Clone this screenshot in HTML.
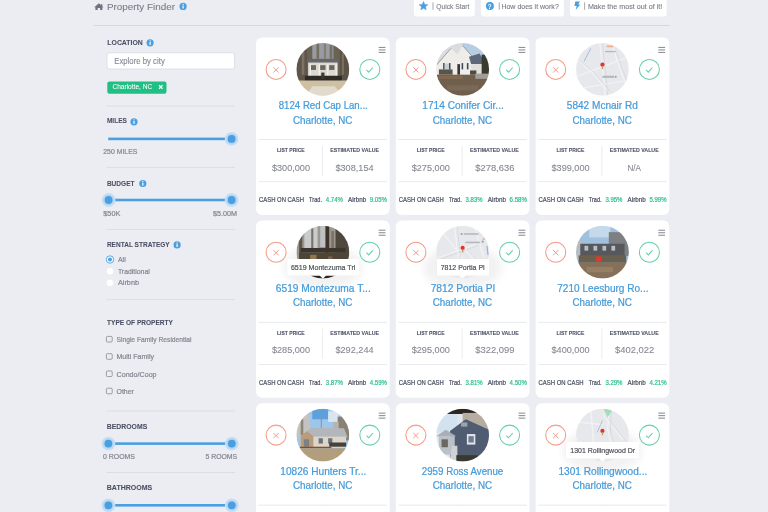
<!DOCTYPE html>
<html><head><meta charset="utf-8"><style>
html,body{margin:0;padding:0;background:#ecedf3;width:768px;height:512px;overflow:hidden}
svg{display:block;position:absolute;left:0;top:0}
#tx{will-change:transform}
text{font-family:"Liberation Sans",sans-serif;white-space:pre}
</style></head><body>
<svg width="768" height="512" viewBox="0 0 768 512">
<defs><filter id="blur3" x="-50%" y="-50%" width="200%" height="200%"><feGaussianBlur stdDeviation="4"/></filter><filter id="imgblur" x="-10%" y="-10%" width="120%" height="120%"><feGaussianBlur stdDeviation="0.7"/></filter><filter id="blur1" x="-50%" y="-50%" width="200%" height="200%"><feGaussianBlur stdDeviation="0.6"/></filter><clipPath id="clip0"><circle cx="322.85" cy="69.4" r="26.4"/></clipPath><clipPath id="clip1"><circle cx="462.65" cy="69.4" r="26.4"/></clipPath><clipPath id="clip2"><circle cx="602.45" cy="69.4" r="26.4"/></clipPath><clipPath id="clip3"><circle cx="322.85" cy="252.20000000000002" r="26.4"/></clipPath><clipPath id="clip4"><circle cx="462.65" cy="252.20000000000002" r="26.4"/></clipPath><clipPath id="clip5"><circle cx="602.45" cy="252.20000000000002" r="26.4"/></clipPath><clipPath id="clip6"><circle cx="322.85" cy="435.1" r="26.4"/></clipPath><clipPath id="clip7"><circle cx="462.65" cy="435.1" r="26.4"/></clipPath><clipPath id="clip8"><circle cx="602.45" cy="435.1" r="26.4"/></clipPath></defs>
<rect width="768" height="512" fill="#ecedf3"/>
<path d="M94.2 7.3 L98.9 3.2 L101.2 5.2 L101.2 3.9 L102.3 3.9 L102.3 6.2 L103.6 7.3 L102.4 7.3 L102.4 9.9 L100.1 9.9 L100.1 7.9 L97.7 7.9 L97.7 9.9 L95.4 9.9 L95.4 7.3 Z" fill="#6f7380"/>
<circle cx="183.1" cy="6.4" r="3.6" fill="#4a9fe0"/><rect x="182.5" y="5.6000000000000005" width="1.2" height="2.9" fill="#fff"/><circle cx="183.1" cy="4.4" r="0.65" fill="#fff"/>
<rect x="94" y="25" width="576" height="1" fill="#d6d7dd"/>
<path d="M413.9 -5 H474.8 V13.5 Q474.8 16.5 471.8 16.5 H416.9 Q413.9 16.5 413.9 13.5 Z" fill="#fff"/>
<path d="M480.9 -5 H563.9 V13.5 Q563.9 16.5 560.9 16.5 H483.9 Q480.9 16.5 480.9 13.5 Z" fill="#fff"/>
<path d="M570 -5 H666.7 V13.5 Q666.7 16.5 663.7 16.5 H573 Q570 16.5 570 13.5 Z" fill="#fff"/>
<polygon points="423.50,1.50 424.73,4.40 427.87,4.68 425.50,6.75 426.20,9.82 423.50,8.20 420.80,9.82 421.50,6.75 419.13,4.68 422.27,4.40" fill="#4a9fe0" stroke="#4a9fe0" stroke-width="0.5" stroke-linejoin="round"/>
<circle cx="489.9" cy="5.9" r="4.0" fill="#4a9fe0"/>
<path d="M575.3 1.4 L579.9 1.4 L578.2 4.6 L580.3 4.6 L575.6 9.9 L576.7 5.9 L574.4 5.9 Z" fill="#4a9fe0"/>
<rect x="432.6" y="2.4" width="0.8" height="7.4" fill="#8f929a"/>
<rect x="498.8" y="2.4" width="0.8" height="7.4" fill="#8f929a"/>
<rect x="584.3" y="2.4" width="0.8" height="7.4" fill="#8f929a"/>
<circle cx="150.1" cy="42.8" r="3.6" fill="#4a9fe0"/><rect x="149.5" y="42.0" width="1.2" height="2.9" fill="#fff"/><circle cx="150.1" cy="40.8" r="0.65" fill="#fff"/>
<rect x="107" y="52.8" width="127.6" height="16.2" rx="2" fill="#fff" stroke="#d8d9df" stroke-width="0.8"/>
<rect x="107.3" y="81.5" width="59.2" height="12.2" rx="2" fill="#20bf84"/>
<path d="M159.1 85.3 L162.5 88.7 M162.5 85.3 L159.1 88.7" stroke="#fff" stroke-width="1.3"/>
<rect x="106.5" y="105.6" width="128.5" height="1" fill="#dcdde3"/>
<circle cx="134.0" cy="121.8" r="3.6" fill="#4a9fe0"/><rect x="133.4" y="121.0" width="1.2" height="2.9" fill="#fff"/><circle cx="134.0" cy="119.8" r="0.65" fill="#fff"/>
<rect x="108.2" y="137.6" width="123.39999999999999" height="2.6" fill="#4a9fe0"/>
<circle cx="231.6" cy="138.9" r="6.9" fill="#c6dff4"/><circle cx="231.6" cy="138.9" r="5.4" fill="#b5d5f1"/><circle cx="231.6" cy="138.9" r="3.9" fill="#4a9fe0"/>
<rect x="106.5" y="166.9" width="128.5" height="1" fill="#dcdde3"/>
<circle cx="142.8" cy="183.5" r="3.6" fill="#4a9fe0"/><rect x="142.20000000000002" y="182.7" width="1.2" height="2.9" fill="#fff"/><circle cx="142.8" cy="181.5" r="0.65" fill="#fff"/>
<rect x="108.2" y="198.7" width="123.39999999999999" height="2.6" fill="#4a9fe0"/>
<circle cx="108.6" cy="200.0" r="6.9" fill="#c6dff4"/><circle cx="108.6" cy="200.0" r="5.4" fill="#b5d5f1"/><circle cx="108.6" cy="200.0" r="3.9" fill="#4a9fe0"/>
<circle cx="231.6" cy="200.0" r="6.9" fill="#c6dff4"/><circle cx="231.6" cy="200.0" r="5.4" fill="#b5d5f1"/><circle cx="231.6" cy="200.0" r="3.9" fill="#4a9fe0"/>
<rect x="106.5" y="228.9" width="128.5" height="1" fill="#dcdde3"/>
<circle cx="177.1" cy="244.9" r="3.6" fill="#4a9fe0"/><rect x="176.5" y="244.1" width="1.2" height="2.9" fill="#fff"/><circle cx="177.1" cy="242.9" r="0.65" fill="#fff"/>
<circle cx="110" cy="259.5" r="3.7" fill="#fff" stroke="#4a9fe0" stroke-width="0.9"/><circle cx="110" cy="259.5" r="2" fill="#4a9fe0"/>
<circle cx="110" cy="271.2" r="3.8" fill="#fff" stroke="#e4e5ea" stroke-width="0.6"/>
<circle cx="110" cy="282.9" r="3.8" fill="#fff" stroke="#e4e5ea" stroke-width="0.6"/>
<rect x="106.5" y="299.1" width="128.5" height="1" fill="#dcdde3"/>
<rect x="106.4" y="336.40000000000003" width="5.8" height="5.6" rx="1" fill="none" stroke="#80838c" stroke-width="0.75"/>
<rect x="106.4" y="353.67" width="5.8" height="5.6" rx="1" fill="none" stroke="#80838c" stroke-width="0.75"/>
<rect x="106.4" y="370.94000000000005" width="5.8" height="5.6" rx="1" fill="none" stroke="#80838c" stroke-width="0.75"/>
<rect x="106.4" y="388.21000000000004" width="5.8" height="5.6" rx="1" fill="none" stroke="#80838c" stroke-width="0.75"/>
<rect x="106.5" y="410.4" width="128.5" height="1" fill="#dcdde3"/>
<rect x="108.2" y="442.3" width="123.39999999999999" height="2.6" fill="#4a9fe0"/>
<circle cx="108.4" cy="443.6" r="6.9" fill="#c6dff4"/><circle cx="108.4" cy="443.6" r="5.4" fill="#b5d5f1"/><circle cx="108.4" cy="443.6" r="3.9" fill="#4a9fe0"/>
<circle cx="231.8" cy="443.6" r="6.9" fill="#c6dff4"/><circle cx="231.8" cy="443.6" r="5.4" fill="#b5d5f1"/><circle cx="231.8" cy="443.6" r="3.9" fill="#4a9fe0"/>
<rect x="106.5" y="472.0" width="128.5" height="1" fill="#dcdde3"/>
<rect x="108.2" y="504.0" width="123.39999999999999" height="2.6" fill="#4a9fe0"/>
<circle cx="108.4" cy="505.3" r="6.9" fill="#c6dff4"/><circle cx="108.4" cy="505.3" r="5.4" fill="#b5d5f1"/><circle cx="108.4" cy="505.3" r="3.9" fill="#4a9fe0"/>
<circle cx="231.8" cy="505.3" r="6.9" fill="#c6dff4"/><circle cx="231.8" cy="505.3" r="5.4" fill="#b5d5f1"/><circle cx="231.8" cy="505.3" r="3.9" fill="#4a9fe0"/>
<rect x="256.0" y="37.6" width="133.7" height="177.3" rx="6" fill="#fff"/>
<g clip-path="url(#clip0)"><g filter="url(#imgblur)"><rect x="296.45" y="43.00" width="52.80" height="52.80" fill="#6a6253" opacity="1"/><rect x="312.29" y="43.00" width="21.12" height="15.84" fill="#989ca2" opacity="1"/><rect x="316.51" y="43.00" width="2.64" height="15.84" fill="#766f63" opacity="1"/><rect x="323.91" y="43.00" width="2.11" height="15.84" fill="#857e72" opacity="1"/><rect x="329.71" y="45.11" width="2.64" height="13.73" fill="#766f63" opacity="1"/><rect x="296.45" y="43.00" width="10.56" height="38.02" fill="#5e5649" opacity="1"/><rect x="301.73" y="48.28" width="2.64" height="26.40" fill="#7d7365" opacity="1"/><rect x="339.75" y="43.00" width="9.50" height="38.02" fill="#5b5347" opacity="1"/><rect x="341.86" y="53.56" width="2.11" height="21.12" fill="#7a7062" opacity="1"/><rect x="307.01" y="59.37" width="31.68" height="3.17" fill="#65686c" opacity="1"/><rect x="308.07" y="62.54" width="29.57" height="14.26" fill="#dbd9d2" opacity="1"/><rect x="310.71" y="65.18" width="5.28" height="4.75" fill="#6a6660" opacity="1"/><rect x="320.21" y="65.18" width="5.28" height="4.75" fill="#6a6660" opacity="1"/><rect x="329.19" y="65.18" width="5.28" height="4.75" fill="#6a6660" opacity="1"/><rect x="309.65" y="64.12" width="1.32" height="12.67" fill="#f2f0ea" opacity="1"/><rect x="318.63" y="64.12" width="1.32" height="12.67" fill="#f2f0ea" opacity="1"/><rect x="327.07" y="64.12" width="1.32" height="12.67" fill="#f2f0ea" opacity="1"/><rect x="335.52" y="64.12" width="1.32" height="12.67" fill="#f2f0ea" opacity="1"/><rect x="304.90" y="75.74" width="36.96" height="5.28" fill="#2e2c28" opacity="1"/><rect x="321.27" y="72.57" width="3.17" height="6.34" fill="#3a3733" opacity="1"/><rect x="296.45" y="80.49" width="52.80" height="15.31" fill="#cfc0a3" opacity="1"/><polygon points="305.95,95.80 312.29,86.30 334.47,86.30 343.97,95.80" fill="#e2dacd" opacity="1"/></g></g>
<circle cx="276.1" cy="69.4" r="10" fill="none" stroke="#f59a86" stroke-width="1.05"/><path d="M273.5 67.30000000000001 L278.70000000000005 72.5 M278.70000000000005 67.30000000000001 L273.5 72.5" stroke="#f59a86" stroke-width="1.0"/>
<circle cx="369.8" cy="69.4" r="10" fill="none" stroke="#66d0a8" stroke-width="1.05"/><path d="M366.5 69.9 L368.7 72.10000000000001 L372.90000000000003 67.5" fill="none" stroke="#66d0a8" stroke-width="1.1"/>
<rect x="378.7" y="46.900000000000006" width="6.8" height="1.05" fill="#8a8d96"/>
<rect x="378.7" y="49.400000000000006" width="6.8" height="1.05" fill="#8a8d96"/>
<rect x="378.7" y="51.900000000000006" width="6.8" height="1.05" fill="#8a8d96"/>
<rect x="258.6" y="139.0" width="128.3" height="1" fill="#e8e9ee"/>
<rect x="321.9" y="145.9" width="0.8" height="30" fill="#e8e9ee"/>
<rect x="258.6" y="181.2" width="128.3" height="0.9" fill="#e8e9ee"/>
<rect x="395.8" y="37.6" width="133.7" height="177.3" rx="6" fill="#fff"/>
<g clip-path="url(#clip1)"><g filter="url(#imgblur)"><rect x="436.25" y="43.00" width="52.80" height="52.80" fill="#d9dde2" opacity="1"/><rect x="462.65" y="43.00" width="26.40" height="14.78" fill="#b7cde3" opacity="1"/><polygon points="436.25,66.23 451.03,48.28 457.37,54.62 462.65,45.64 475.32,59.90 475.32,75.74 436.25,75.74" fill="#efedea" opacity="1"/><line x1="436.25" y1="65.18" x2="451.03" y2="48.28" stroke="#8a8378" stroke-width="0.7" opacity="1"/><line x1="462.65" y1="45.64" x2="475.32" y2="59.90" stroke="#8a8378" stroke-width="0.7" opacity="1"/><polygon points="468.99,56.73 479.55,53.56 485.88,64.12 471.10,64.12" fill="#5d687a" opacity="1"/><rect x="471.10" y="64.12" width="10.56" height="10.56" fill="#e2e0dc" opacity="1"/><rect x="481.66" y="54.62" width="7.39" height="20.06" fill="#383a2d" opacity="1"/><rect x="443.11" y="63.06" width="1.58" height="6.34" fill="#3f4a60" opacity="1"/><rect x="448.92" y="63.06" width="1.58" height="6.34" fill="#3f4a60" opacity="1"/><rect x="444.70" y="63.59" width="4.22" height="5.28" fill="#c8ccd4" opacity="1"/><rect x="461.59" y="63.06" width="1.58" height="6.34" fill="#3f4a60" opacity="1"/><rect x="466.87" y="63.06" width="1.58" height="6.34" fill="#3f4a60" opacity="1"/><rect x="457.37" y="64.12" width="2.64" height="10.56" fill="#3a3632" opacity="1"/><rect x="438.89" y="69.40" width="13.73" height="5.28" fill="#5a5448" opacity="1"/><rect x="470.04" y="70.46" width="6.34" height="4.22" fill="#4f4a40" opacity="1"/><rect x="436.25" y="74.68" width="52.80" height="21.12" fill="#6f5f4e" opacity="1"/><rect x="475.32" y="73.62" width="13.73" height="5.28" fill="#a29d96" opacity="1"/><rect x="438.89" y="75.74" width="23.76" height="3.17" fill="#8d6c52" opacity="0.7"/><rect x="446.81" y="85.24" width="31.68" height="5.28" fill="#7e6d5b" opacity="0.7"/></g></g>
<circle cx="415.90000000000003" cy="69.4" r="10" fill="none" stroke="#f59a86" stroke-width="1.05"/><path d="M413.3 67.30000000000001 L418.50000000000006 72.5 M418.50000000000006 67.30000000000001 L413.3 72.5" stroke="#f59a86" stroke-width="1.0"/>
<circle cx="509.6" cy="69.4" r="10" fill="none" stroke="#66d0a8" stroke-width="1.05"/><path d="M506.3 69.9 L508.5 72.10000000000001 L512.7 67.5" fill="none" stroke="#66d0a8" stroke-width="1.1"/>
<rect x="518.5" y="46.900000000000006" width="6.8" height="1.05" fill="#8a8d96"/>
<rect x="518.5" y="49.400000000000006" width="6.8" height="1.05" fill="#8a8d96"/>
<rect x="518.5" y="51.900000000000006" width="6.8" height="1.05" fill="#8a8d96"/>
<rect x="398.40000000000003" y="139.0" width="128.3" height="1" fill="#e8e9ee"/>
<rect x="461.70000000000005" y="145.9" width="0.8" height="30" fill="#e8e9ee"/>
<rect x="398.40000000000003" y="181.2" width="128.3" height="0.9" fill="#e8e9ee"/>
<rect x="535.6" y="37.6" width="133.7" height="177.3" rx="6" fill="#fff"/>
<g clip-path="url(#clip2)"><g filter="url(#imgblur)"><rect x="576.05" y="43.00" width="52.80" height="52.80" fill="#e7e8eb" opacity="1"/><polyline points="578.69,75.74 602.45,66.76 626.21,57.78" fill="none" stroke="#f3f3f5" stroke-width="1.2" opacity="1"/><polyline points="599.81,43.00 602.45,66.76 605.09,95.80" fill="none" stroke="#f3f3f5" stroke-width="1.2" opacity="1"/><polyline points="576.05,58.84 591.89,72.04 607.73,90.52" fill="none" stroke="#f3f3f5" stroke-width="1.2" opacity="1"/><polyline points="613.01,48.28 618.29,64.12 626.21,85.24" fill="none" stroke="#f3f3f5" stroke-width="1.2" opacity="1"/><polyline points="583.97,87.88 623.57,81.02" fill="none" stroke="#f3f3f5" stroke-width="1.2" opacity="1"/><polyline points="602.45,44.06 605.09,67.82 607.73,96.86" fill="none" stroke="#c5c8cd" stroke-width="0.4" opacity="1"/><polyline points="578.69,59.90 594.53,73.10 610.37,91.58" fill="none" stroke="#c5c8cd" stroke-width="0.4" opacity="1"/><polyline points="615.65,49.34 620.93,65.18 628.85,86.30" fill="none" stroke="#c5c8cd" stroke-width="0.4" opacity="1"/><line x1="583.97" y1="61.48" x2="590.83" y2="48.28" stroke="#8fb3dc" stroke-width="0.8" opacity="1"/><rect x="606.67" y="45.64" width="6.34" height="1.58" fill="#f0a888" opacity="1"/><rect x="605.09" y="50.92" width="10.56" height="1.32" fill="#b3b6bb" opacity="1"/><rect x="602.45" y="75.74" width="11.62" height="2.11" fill="#b3b6bb" opacity="1"/><circle cx="615.65" cy="76.79" r="1.06" fill="#9a9ea5" opacity="1"/><circle cx="602.45" cy="64.65" r="2.11" fill="#e0352b" opacity="1"/><rect x="601.82" y="65.97" width="1.27" height="3.17" fill="#c9956e" opacity="1"/></g></g>
<circle cx="555.7" cy="69.4" r="10" fill="none" stroke="#f59a86" stroke-width="1.05"/><path d="M553.1 67.30000000000001 L558.3000000000001 72.5 M558.3000000000001 67.30000000000001 L553.1 72.5" stroke="#f59a86" stroke-width="1.0"/>
<circle cx="649.4" cy="69.4" r="10" fill="none" stroke="#66d0a8" stroke-width="1.05"/><path d="M646.1 69.9 L648.3 72.10000000000001 L652.5 67.5" fill="none" stroke="#66d0a8" stroke-width="1.1"/>
<rect x="658.3000000000001" y="46.900000000000006" width="6.8" height="1.05" fill="#8a8d96"/>
<rect x="658.3000000000001" y="49.400000000000006" width="6.8" height="1.05" fill="#8a8d96"/>
<rect x="658.3000000000001" y="51.900000000000006" width="6.8" height="1.05" fill="#8a8d96"/>
<rect x="538.2" y="139.0" width="128.3" height="1" fill="#e8e9ee"/>
<rect x="601.5" y="145.9" width="0.8" height="30" fill="#e8e9ee"/>
<rect x="538.2" y="181.2" width="128.3" height="0.9" fill="#e8e9ee"/>
<rect x="256.0" y="220.4" width="133.7" height="177.3" rx="6" fill="#fff"/>
<ellipse cx="322.85" cy="267.4" rx="40" ry="22" fill="#000" opacity="0.05" filter="url(#blur3)"/>
<g clip-path="url(#clip3)"><g filter="url(#imgblur)"><rect x="296.45" y="225.80" width="52.80" height="52.80" fill="#9c9890" opacity="1"/><rect x="304.37" y="225.80" width="13.20" height="23.76" fill="#c9cbcd" opacity="1"/><rect x="320.21" y="225.80" width="5.28" height="21.12" fill="#bfc1c3" opacity="1"/><rect x="299.09" y="228.44" width="3.17" height="29.04" fill="#5e554a" opacity="1"/><rect x="311.23" y="228.44" width="2.11" height="23.76" fill="#7a7265" opacity="1"/><rect x="325.49" y="225.80" width="3.70" height="36.96" fill="#3e352b" opacity="1"/><rect x="335.52" y="225.80" width="13.73" height="42.24" fill="#4f463b" opacity="1"/><rect x="331.30" y="231.08" width="2.64" height="23.76" fill="#7b7265" opacity="1"/><rect x="300.67" y="247.98" width="44.88" height="4.22" fill="#3a352e" opacity="1"/><rect x="299.09" y="252.20" width="47.52" height="15.84" fill="#4e4538" opacity="1"/><rect x="310.18" y="254.84" width="6.34" height="7.39" fill="#96764f" opacity="1"/><rect x="328.13" y="256.42" width="4.22" height="5.28" fill="#7d6148" opacity="1"/><rect x="296.45" y="268.04" width="52.80" height="10.56" fill="#2b2620" opacity="1"/></g></g>
<circle cx="276.1" cy="252.20000000000002" r="10" fill="none" stroke="#f59a86" stroke-width="1.05"/><path d="M273.5 250.10000000000002 L278.70000000000005 255.3 M278.70000000000005 250.10000000000002 L273.5 255.3" stroke="#f59a86" stroke-width="1.0"/>
<circle cx="369.8" cy="252.20000000000002" r="10" fill="none" stroke="#66d0a8" stroke-width="1.05"/><path d="M366.5 252.70000000000002 L368.7 254.9 L372.90000000000003 250.3" fill="none" stroke="#66d0a8" stroke-width="1.1"/>
<rect x="378.7" y="229.70000000000002" width="6.8" height="1.05" fill="#8a8d96"/>
<rect x="378.7" y="232.20000000000002" width="6.8" height="1.05" fill="#8a8d96"/>
<rect x="378.7" y="234.70000000000002" width="6.8" height="1.05" fill="#8a8d96"/>
<rect x="258.6" y="321.8" width="128.3" height="1" fill="#e8e9ee"/>
<rect x="321.9" y="328.7" width="0.8" height="30" fill="#e8e9ee"/>
<rect x="258.6" y="364.0" width="128.3" height="0.9" fill="#e8e9ee"/>
<rect x="287.15000000000003" y="259.0" width="71.80000000000001" height="16.80000000000001" fill="#000" opacity="0.10" rx="1.5" filter="url(#blur1)"/>
<path d="M288.15000000000003 259.0 H357.95000000000005 Q358.95000000000005 259.0 358.95000000000005 260.0 V274.8 Q358.95000000000005 275.8 357.95000000000005 275.8 H325.85 L322.85 278.8 L319.85 275.8 H288.15000000000003 Q287.15000000000003 275.8 287.15000000000003 274.8 V260.0 Q287.15000000000003 259.0 288.15000000000003 259.0 Z" fill="#fff"/>
<rect x="395.8" y="220.4" width="133.7" height="177.3" rx="6" fill="#fff"/>
<ellipse cx="462.65" cy="267.4" rx="40" ry="22" fill="#000" opacity="0.05" filter="url(#blur3)"/>
<g clip-path="url(#clip4)"><g filter="url(#imgblur)"><rect x="436.25" y="225.80" width="52.80" height="52.80" fill="#e7e8eb" opacity="1"/><polyline points="441.53,231.08 452.09,244.28 465.29,262.76" fill="none" stroke="#f3f3f5" stroke-width="1.2" opacity="1"/><polyline points="454.73,225.80 457.37,252.20 460.01,278.60" fill="none" stroke="#f3f3f5" stroke-width="1.2" opacity="1"/><polyline points="436.25,258.54 475.85,244.28" fill="none" stroke="#f3f3f5" stroke-width="1.2" opacity="1"/><polyline points="465.29,249.56 486.41,273.32" fill="none" stroke="#f3f3f5" stroke-width="1.2" opacity="1"/><polyline points="474.27,225.80 483.77,257.48" fill="none" stroke="#f3f3f5" stroke-width="1.2" opacity="1"/><polyline points="457.37,226.86 460.01,253.26 462.65,279.66" fill="none" stroke="#c5c8cd" stroke-width="0.4" opacity="1"/><polyline points="438.89,259.59 478.49,245.34" fill="none" stroke="#c5c8cd" stroke-width="0.4" opacity="1"/><polyline points="467.93,250.62 489.05,274.38" fill="none" stroke="#c5c8cd" stroke-width="0.4" opacity="1"/><line x1="486.94" y1="245.86" x2="487.99" y2="254.84" stroke="#8fb3dc" stroke-width="1.2" opacity="1"/><rect x="463.71" y="233.19" width="14.78" height="1.58" fill="#b5b8bd" opacity="1"/><circle cx="461.59" cy="233.98" r="1.06" fill="#9a9ea5" opacity="1"/><rect x="465.29" y="241.64" width="14.78" height="1.58" fill="#b5b8bd" opacity="1"/><circle cx="482.71" cy="241.64" r="1.06" fill="#9a9ea5" opacity="1"/><circle cx="478.49" cy="228.44" r="1.06" fill="#f0a888" opacity="1"/><circle cx="483.77" cy="239.00" r="1.06" fill="#f0a888" opacity="1"/><circle cx="462.65" cy="247.98" r="2.11" fill="#e0352b" opacity="1"/><rect x="462.02" y="249.30" width="1.27" height="3.17" fill="#c9956e" opacity="1"/></g></g>
<circle cx="415.90000000000003" cy="252.20000000000002" r="10" fill="none" stroke="#f59a86" stroke-width="1.05"/><path d="M413.3 250.10000000000002 L418.50000000000006 255.3 M418.50000000000006 250.10000000000002 L413.3 255.3" stroke="#f59a86" stroke-width="1.0"/>
<circle cx="509.6" cy="252.20000000000002" r="10" fill="none" stroke="#66d0a8" stroke-width="1.05"/><path d="M506.3 252.70000000000002 L508.5 254.9 L512.7 250.3" fill="none" stroke="#66d0a8" stroke-width="1.1"/>
<rect x="518.5" y="229.70000000000002" width="6.8" height="1.05" fill="#8a8d96"/>
<rect x="518.5" y="232.20000000000002" width="6.8" height="1.05" fill="#8a8d96"/>
<rect x="518.5" y="234.70000000000002" width="6.8" height="1.05" fill="#8a8d96"/>
<rect x="398.40000000000003" y="321.8" width="128.3" height="1" fill="#e8e9ee"/>
<rect x="461.70000000000005" y="328.7" width="0.8" height="30" fill="#e8e9ee"/>
<rect x="398.40000000000003" y="364.0" width="128.3" height="0.9" fill="#e8e9ee"/>
<rect x="436.84999999999997" y="259.0" width="52.7" height="16.80000000000001" fill="#000" opacity="0.10" rx="1.5" filter="url(#blur1)"/>
<path d="M437.84999999999997 259.0 H488.54999999999995 Q489.54999999999995 259.0 489.54999999999995 260.0 V274.8 Q489.54999999999995 275.8 488.54999999999995 275.8 H465.65 L462.65 278.8 L459.65 275.8 H437.84999999999997 Q436.84999999999997 275.8 436.84999999999997 274.8 V260.0 Q436.84999999999997 259.0 437.84999999999997 259.0 Z" fill="#fff"/>
<rect x="535.6" y="220.4" width="133.7" height="177.3" rx="6" fill="#fff"/>
<g clip-path="url(#clip5)"><g filter="url(#imgblur)"><rect x="576.05" y="225.80" width="52.80" height="52.80" fill="#9fc0de" opacity="1"/><rect x="589.25" y="225.80" width="21.12" height="11.62" fill="#c6d9ea" opacity="1"/><rect x="608.79" y="232.14" width="20.06" height="23.76" fill="#7d7f82" opacity="1"/><rect x="576.05" y="239.00" width="6.34" height="20.06" fill="#b7bcc2" opacity="1"/><rect x="580.27" y="243.75" width="44.35" height="12.67" fill="#57595c" opacity="1"/><rect x="584.50" y="245.86" width="3.70" height="4.75" fill="#b9c0c9" opacity="1"/><rect x="593.47" y="245.86" width="3.70" height="4.75" fill="#b9c0c9" opacity="1"/><rect x="602.45" y="245.86" width="3.70" height="4.75" fill="#b9c0c9" opacity="1"/><rect x="611.43" y="245.86" width="3.70" height="4.75" fill="#b9c0c9" opacity="1"/><rect x="578.69" y="255.37" width="47.52" height="7.39" fill="#6b6050" opacity="1"/><rect x="596.11" y="256.42" width="5.28" height="5.28" fill="#e0392c" opacity="1"/><rect x="576.05" y="262.76" width="52.80" height="15.84" fill="#86705a" opacity="1"/><rect x="586.61" y="266.98" width="26.40" height="5.28" fill="#9c8669" opacity="0.7"/></g></g>
<circle cx="555.7" cy="252.20000000000002" r="10" fill="none" stroke="#f59a86" stroke-width="1.05"/><path d="M553.1 250.10000000000002 L558.3000000000001 255.3 M558.3000000000001 250.10000000000002 L553.1 255.3" stroke="#f59a86" stroke-width="1.0"/>
<circle cx="649.4" cy="252.20000000000002" r="10" fill="none" stroke="#66d0a8" stroke-width="1.05"/><path d="M646.1 252.70000000000002 L648.3 254.9 L652.5 250.3" fill="none" stroke="#66d0a8" stroke-width="1.1"/>
<rect x="658.3000000000001" y="229.70000000000002" width="6.8" height="1.05" fill="#8a8d96"/>
<rect x="658.3000000000001" y="232.20000000000002" width="6.8" height="1.05" fill="#8a8d96"/>
<rect x="658.3000000000001" y="234.70000000000002" width="6.8" height="1.05" fill="#8a8d96"/>
<rect x="538.2" y="321.8" width="128.3" height="1" fill="#e8e9ee"/>
<rect x="601.5" y="328.7" width="0.8" height="30" fill="#e8e9ee"/>
<rect x="538.2" y="364.0" width="128.3" height="0.9" fill="#e8e9ee"/>
<rect x="256.0" y="403.3" width="133.7" height="177.3" rx="6" fill="#fff"/>
<g clip-path="url(#clip6)"><g filter="url(#imgblur)"><rect x="296.45" y="408.70" width="52.80" height="52.80" fill="#9ec6ea" opacity="1"/><rect x="312.29" y="408.70" width="15.84" height="10.56" fill="#5f9fdc" opacity="1"/><rect x="328.13" y="411.34" width="10.56" height="10.56" fill="#d9e6f1" opacity="1"/><rect x="296.45" y="413.98" width="13.20" height="23.76" fill="#c4c3c0" opacity="1"/><rect x="300.67" y="419.26" width="2.64" height="15.84" fill="#8e8679" opacity="1"/><rect x="337.63" y="416.62" width="11.62" height="23.76" fill="#8a8174" opacity="1"/><rect x="333.41" y="421.90" width="5.28" height="10.56" fill="#b8b4ac" opacity="1"/><line x1="321.27" y1="418.20" x2="321.27" y2="429.82" stroke="#8d9196" stroke-width="1.0" opacity="1"/><polygon points="299.62,437.21 311.23,427.71 343.97,428.24 347.67,437.21" fill="#b3b7bb" opacity="1"/><rect x="300.67" y="436.68" width="45.41" height="11.09" fill="#dcd6ca" opacity="1"/><polygon points="300.67,447.77 300.67,436.16 307.01,430.88 313.35,436.16 313.35,447.77" fill="#b89d7c" opacity="1"/><rect x="303.84" y="439.32" width="5.28" height="7.39" fill="#7b7f85" opacity="1"/><rect x="318.63" y="438.27" width="4.22" height="5.28" fill="#6d7177" opacity="1"/><rect x="328.13" y="438.27" width="4.22" height="5.28" fill="#6d7177" opacity="1"/><rect x="329.19" y="442.49" width="16.90" height="4.22" fill="#45433e" opacity="1"/><rect x="299.62" y="446.72" width="31.68" height="1.58" fill="#8e4a30" opacity="1"/><rect x="296.45" y="448.30" width="52.80" height="13.20" fill="#b29e7b" opacity="1"/></g></g>
<circle cx="276.1" cy="435.1" r="10" fill="none" stroke="#f59a86" stroke-width="1.05"/><path d="M273.5 433.0 L278.70000000000005 438.20000000000005 M278.70000000000005 433.0 L273.5 438.20000000000005" stroke="#f59a86" stroke-width="1.0"/>
<circle cx="369.8" cy="435.1" r="10" fill="none" stroke="#66d0a8" stroke-width="1.05"/><path d="M366.5 435.6 L368.7 437.8 L372.90000000000003 433.20000000000005" fill="none" stroke="#66d0a8" stroke-width="1.1"/>
<rect x="378.7" y="412.6" width="6.8" height="1.05" fill="#8a8d96"/>
<rect x="378.7" y="415.1" width="6.8" height="1.05" fill="#8a8d96"/>
<rect x="378.7" y="417.6" width="6.8" height="1.05" fill="#8a8d96"/>
<rect x="258.6" y="504.70000000000005" width="128.3" height="1" fill="#e8e9ee"/>
<rect x="321.9" y="511.6" width="0.8" height="30" fill="#e8e9ee"/>
<rect x="258.6" y="546.9" width="128.3" height="0.9" fill="#e8e9ee"/>
<rect x="395.8" y="403.3" width="133.7" height="177.3" rx="6" fill="#fff"/>
<g clip-path="url(#clip7)"><g filter="url(#imgblur)"><rect x="436.25" y="408.70" width="52.80" height="52.80" fill="#e2e6ec" opacity="1"/><rect x="436.25" y="408.70" width="52.80" height="5.28" fill="#2a2520" opacity="1"/><rect x="462.65" y="412.92" width="26.40" height="18.48" fill="#b5ad9f" opacity="1"/><rect x="436.25" y="413.98" width="21.12" height="18.48" fill="#d2e2ef" opacity="1"/><polygon points="449.98,430.88 465.82,419.26 489.05,429.82 489.05,461.50 449.98,461.50" fill="#4f5c71" opacity="1"/><rect x="461.07" y="422.43" width="6.34" height="4.22" fill="#9aa3b0" opacity="1"/><rect x="466.87" y="434.04" width="8.45" height="10.56" fill="#dfe6ee" opacity="1"/><rect x="468.46" y="436.16" width="5.28" height="6.34" fill="#6f7a8a" opacity="1"/><polygon points="436.25,436.16 445.75,429.82 456.31,436.16" fill="#a9afb7" opacity="1"/><rect x="438.89" y="436.16" width="15.84" height="18.48" fill="#bcc1c8" opacity="1"/><rect x="441.53" y="439.32" width="6.34" height="7.92" fill="#6a6660" opacity="1"/><polygon points="449.45,461.50 452.09,445.66 457.37,445.66 457.37,461.50" fill="#cfd3d8" opacity="1"/><rect x="456.31" y="455.16" width="21.12" height="6.34" fill="#3b3833" opacity="1"/></g></g>
<circle cx="415.90000000000003" cy="435.1" r="10" fill="none" stroke="#f59a86" stroke-width="1.05"/><path d="M413.3 433.0 L418.50000000000006 438.20000000000005 M418.50000000000006 433.0 L413.3 438.20000000000005" stroke="#f59a86" stroke-width="1.0"/>
<circle cx="509.6" cy="435.1" r="10" fill="none" stroke="#66d0a8" stroke-width="1.05"/><path d="M506.3 435.6 L508.5 437.8 L512.7 433.20000000000005" fill="none" stroke="#66d0a8" stroke-width="1.1"/>
<rect x="518.5" y="412.6" width="6.8" height="1.05" fill="#8a8d96"/>
<rect x="518.5" y="415.1" width="6.8" height="1.05" fill="#8a8d96"/>
<rect x="518.5" y="417.6" width="6.8" height="1.05" fill="#8a8d96"/>
<rect x="398.40000000000003" y="504.70000000000005" width="128.3" height="1" fill="#e8e9ee"/>
<rect x="461.70000000000005" y="511.6" width="0.8" height="30" fill="#e8e9ee"/>
<rect x="398.40000000000003" y="546.9" width="128.3" height="0.9" fill="#e8e9ee"/>
<rect x="535.6" y="403.3" width="133.7" height="177.3" rx="6" fill="#fff"/>
<ellipse cx="602.45" cy="450.3" rx="40" ry="22" fill="#000" opacity="0.05" filter="url(#blur3)"/>
<g clip-path="url(#clip8)"><g filter="url(#imgblur)"><rect x="576.05" y="408.70" width="52.80" height="52.80" fill="#e7e8eb" opacity="1"/><polyline points="590.83,408.70 592.95,435.10 594.53,461.50" fill="none" stroke="#f3f3f5" stroke-width="1.2" opacity="1"/><polyline points="602.45,413.98 623.57,440.38" fill="none" stroke="#f3f3f5" stroke-width="1.2" opacity="1"/><polyline points="576.05,437.74 618.29,458.86" fill="none" stroke="#f3f3f5" stroke-width="1.2" opacity="1"/><polyline points="608.79,408.70 607.73,429.82 614.07,453.58" fill="none" stroke="#f3f3f5" stroke-width="1.2" opacity="1"/><polyline points="576.05,421.90 602.45,424.54" fill="none" stroke="#f3f3f5" stroke-width="1.2" opacity="1"/><polyline points="605.09,415.04 626.21,441.44" fill="none" stroke="#c5c8cd" stroke-width="0.4" opacity="1"/><polyline points="578.69,438.80 620.93,459.92" fill="none" stroke="#c5c8cd" stroke-width="0.4" opacity="1"/><polyline points="611.43,409.76 610.37,430.88 616.71,454.64" fill="none" stroke="#c5c8cd" stroke-width="0.4" opacity="1"/><polygon points="603.51,408.70 613.01,408.70 607.73,417.15" fill="#a3dbbc" opacity="1"/><line x1="602.45" y1="420.32" x2="597.17" y2="432.46" stroke="#8fb3dc" stroke-width="0.7" opacity="1"/><circle cx="602.45" cy="430.88" r="2.11" fill="#e0352b" opacity="1"/><rect x="601.82" y="432.20" width="1.27" height="3.17" fill="#c9956e" opacity="1"/></g></g>
<circle cx="555.7" cy="435.1" r="10" fill="none" stroke="#f59a86" stroke-width="1.05"/><path d="M553.1 433.0 L558.3000000000001 438.20000000000005 M558.3000000000001 433.0 L553.1 438.20000000000005" stroke="#f59a86" stroke-width="1.0"/>
<circle cx="649.4" cy="435.1" r="10" fill="none" stroke="#66d0a8" stroke-width="1.05"/><path d="M646.1 435.6 L648.3 437.8 L652.5 433.20000000000005" fill="none" stroke="#66d0a8" stroke-width="1.1"/>
<rect x="658.3000000000001" y="412.6" width="6.8" height="1.05" fill="#8a8d96"/>
<rect x="658.3000000000001" y="415.1" width="6.8" height="1.05" fill="#8a8d96"/>
<rect x="658.3000000000001" y="417.6" width="6.8" height="1.05" fill="#8a8d96"/>
<rect x="538.2" y="504.70000000000005" width="128.3" height="1" fill="#e8e9ee"/>
<rect x="601.5" y="511.6" width="0.8" height="30" fill="#e8e9ee"/>
<rect x="538.2" y="546.9" width="128.3" height="0.9" fill="#e8e9ee"/>
<rect x="565.85" y="441.90000000000003" width="73.80000000000001" height="16.799999999999955" fill="#000" opacity="0.10" rx="1.5" filter="url(#blur1)"/>
<path d="M566.85 441.90000000000003 H638.6500000000001 Q639.6500000000001 441.90000000000003 639.6500000000001 442.90000000000003 V457.7 Q639.6500000000001 458.7 638.6500000000001 458.7 H605.45 L602.45 461.7 L599.45 458.7 H566.85 Q565.85 458.7 565.85 457.7 V442.90000000000003 Q565.85 441.90000000000003 566.85 441.90000000000003 Z" fill="#fff"/>
</svg>
<svg id="tx" width="768" height="512" viewBox="0 0 768 512">
<text x="106.90" y="10.00" font-size="9.90" textLength="68.09" lengthAdjust="spacingAndGlyphs" fill="#7b7e88" stroke="#7b7e88" stroke-width="0.12" style="">Property Finder</text>
<text x="487.80" y="8.70" font-size="7.60" textLength="3.80" lengthAdjust="spacingAndGlyphs" fill="#fff" style="font-weight:bold;">?</text>
<text x="436.30" y="8.90" font-size="7.80" textLength="33.08" lengthAdjust="spacingAndGlyphs" fill="#7a7d86" stroke="#7a7d86" stroke-width="0.12" style="">Quick Start</text>
<text x="501.40" y="8.90" font-size="7.80" textLength="57.40" lengthAdjust="spacingAndGlyphs" fill="#7a7d86" stroke="#7a7d86" stroke-width="0.12" style="">How does it work?</text>
<text x="587.90" y="8.90" font-size="7.80" textLength="74.35" lengthAdjust="spacingAndGlyphs" fill="#7a7d86" stroke="#7a7d86" stroke-width="0.12" style="">Make the most out of it!</text>
<text x="107.30" y="45.00" font-size="7.40" textLength="35.51" lengthAdjust="spacingAndGlyphs" fill="#4a5063" stroke="#4a5063" stroke-width="0.08" style="font-weight:bold;">LOCATION</text>
<text x="114.20" y="64.20" font-size="8.30" textLength="50.60" lengthAdjust="spacingAndGlyphs" fill="#868993" stroke="#868993" stroke-width="0.12" style="">Explore by city</text>
<text x="112.40" y="89.40" font-size="7.30" textLength="39.84" lengthAdjust="spacingAndGlyphs" fill="#fff" stroke="#fff" stroke-width="0.05" style="">Charlotte, NC</text>
<text x="106.90" y="123.30" font-size="7.40" textLength="20.04" lengthAdjust="spacingAndGlyphs" fill="#4a5063" stroke="#4a5063" stroke-width="0.08" style="font-weight:bold;">MILES</text>
<text x="103.30" y="154.30" font-size="7.40" textLength="34.03" lengthAdjust="spacingAndGlyphs" fill="#848791" stroke="#848791" stroke-width="0.22" style="">250 MILES</text>
<text x="106.90" y="185.70" font-size="7.40" textLength="27.67" lengthAdjust="spacingAndGlyphs" fill="#4a5063" stroke="#4a5063" stroke-width="0.08" style="font-weight:bold;">BUDGET</text>
<text x="103.30" y="215.70" font-size="7.40" textLength="17.03" lengthAdjust="spacingAndGlyphs" fill="#848791" stroke="#848791" stroke-width="0.22" style="">$50K</text>
<text x="213.00" y="215.70" font-size="7.40" textLength="24.15" lengthAdjust="spacingAndGlyphs" fill="#848791" stroke="#848791" stroke-width="0.22" style="">$5.00M</text>
<text x="106.90" y="247.10" font-size="7.40" textLength="62.84" lengthAdjust="spacingAndGlyphs" fill="#4a5063" stroke="#4a5063" stroke-width="0.08" style="font-weight:bold;">RENTAL STRATEGY</text>
<text x="117.90" y="261.90" font-size="7.60" textLength="7.81" lengthAdjust="spacingAndGlyphs" fill="#848791" stroke="#848791" stroke-width="0.22" style="">All</text>
<text x="117.90" y="273.60" font-size="7.60" textLength="31.92" lengthAdjust="spacingAndGlyphs" fill="#848791" stroke="#848791" stroke-width="0.22" style="">Traditional</text>
<text x="117.90" y="285.30" font-size="7.60" textLength="21.11" lengthAdjust="spacingAndGlyphs" fill="#848791" stroke="#848791" stroke-width="0.22" style="">Airbnb</text>
<text x="107.10" y="325.00" font-size="7.40" textLength="65.84" lengthAdjust="spacingAndGlyphs" fill="#4a5063" stroke="#4a5063" stroke-width="0.08" style="font-weight:bold;">TYPE OF PROPERTY</text>
<text x="116.50" y="342.00" font-size="7.40" textLength="75.08" lengthAdjust="spacingAndGlyphs" fill="#848791" stroke="#848791" stroke-width="0.22" style="">Single Family Residential</text>
<text x="116.50" y="359.27" font-size="7.40" textLength="37.51" lengthAdjust="spacingAndGlyphs" fill="#848791" stroke="#848791" stroke-width="0.22" style="">Multi Family</text>
<text x="116.50" y="376.54" font-size="7.40" textLength="40.11" lengthAdjust="spacingAndGlyphs" fill="#848791" stroke="#848791" stroke-width="0.22" style="">Condo/Coop</text>
<text x="116.50" y="393.81" font-size="7.40" textLength="17.39" lengthAdjust="spacingAndGlyphs" fill="#848791" stroke="#848791" stroke-width="0.22" style="">Other</text>
<text x="106.80" y="429.20" font-size="7.40" textLength="40.43" lengthAdjust="spacingAndGlyphs" fill="#4a5063" stroke="#4a5063" stroke-width="0.08" style="font-weight:bold;">BEDROOMS</text>
<text x="102.90" y="459.30" font-size="7.40" textLength="32.13" lengthAdjust="spacingAndGlyphs" fill="#848791" stroke="#848791" stroke-width="0.22" style="">0 ROOMS</text>
<text x="205.40" y="459.30" font-size="7.40" textLength="31.83" lengthAdjust="spacingAndGlyphs" fill="#848791" stroke="#848791" stroke-width="0.22" style="">5 ROOMS</text>
<text x="106.80" y="490.10" font-size="7.40" textLength="45.43" lengthAdjust="spacingAndGlyphs" fill="#4a5063" stroke="#4a5063" stroke-width="0.08" style="font-weight:bold;">BATHROOMS</text>
<text x="278.75" y="109.00" font-size="10.40" textLength="89.02" lengthAdjust="spacingAndGlyphs" fill="#449ad9" stroke="#449ad9" stroke-width="0.22" style="">8124 Red Cap Lan...</text>
<text x="292.90" y="123.60" font-size="10.40" textLength="59.43" lengthAdjust="spacingAndGlyphs" fill="#449ad9" stroke="#449ad9" stroke-width="0.22" style="">Charlotte, NC</text>
<text x="276.90" y="152.10" font-size="6.10" textLength="27.85" lengthAdjust="spacingAndGlyphs" fill="#4a5063" stroke="#4a5063" stroke-width="0.08" style="font-weight:bold;">LIST PRICE</text>
<text x="330.20" y="152.10" font-size="6.10" textLength="48.86" lengthAdjust="spacingAndGlyphs" fill="#4a5063" stroke="#4a5063" stroke-width="0.08" style="font-weight:bold;">ESTIMATED VALUE</text>
<text x="271.90" y="170.50" font-size="9.60" textLength="38.12" lengthAdjust="spacingAndGlyphs" fill="#858892" stroke="#858892" stroke-width="0.1" style="">$300,000</text>
<text x="335.40" y="170.50" font-size="9.60" textLength="38.26" lengthAdjust="spacingAndGlyphs" fill="#858892" stroke="#858892" stroke-width="0.1" style="">$308,154</text>
<text x="259.00" y="201.90" font-size="7.00" textLength="45.05" lengthAdjust="spacingAndGlyphs" fill="#4a5063" stroke="#4a5063" stroke-width="0.22" style="">CASH ON CASH</text>
<text x="309.10" y="201.90" font-size="7.00" textLength="12.86" lengthAdjust="spacingAndGlyphs" fill="#4a5063" stroke="#4a5063" stroke-width="0.22" style="">Trad.</text>
<text x="325.80" y="201.90" font-size="7.00" textLength="17.09" lengthAdjust="spacingAndGlyphs" fill="#2fc18f" stroke="#2fc18f" stroke-width="0.22" style="">4.74%</text>
<text x="348.00" y="201.90" font-size="7.00" textLength="18.20" lengthAdjust="spacingAndGlyphs" fill="#4a5063" stroke="#4a5063" stroke-width="0.22" style="">Airbnb</text>
<text x="369.80" y="201.90" font-size="7.00" textLength="17.19" lengthAdjust="spacingAndGlyphs" fill="#2fc18f" stroke="#2fc18f" stroke-width="0.22" style="">9.05%</text>
<text x="422.35" y="109.00" font-size="10.40" textLength="81.46" lengthAdjust="spacingAndGlyphs" fill="#449ad9" stroke="#449ad9" stroke-width="0.22" style="">1714 Conifer Cir...</text>
<text x="432.70" y="123.60" font-size="10.40" textLength="59.43" lengthAdjust="spacingAndGlyphs" fill="#449ad9" stroke="#449ad9" stroke-width="0.22" style="">Charlotte, NC</text>
<text x="416.70" y="152.10" font-size="6.10" textLength="27.85" lengthAdjust="spacingAndGlyphs" fill="#4a5063" stroke="#4a5063" stroke-width="0.08" style="font-weight:bold;">LIST PRICE</text>
<text x="470.00" y="152.10" font-size="6.10" textLength="48.86" lengthAdjust="spacingAndGlyphs" fill="#4a5063" stroke="#4a5063" stroke-width="0.08" style="font-weight:bold;">ESTIMATED VALUE</text>
<text x="411.70" y="170.50" font-size="9.60" textLength="38.12" lengthAdjust="spacingAndGlyphs" fill="#858892" stroke="#858892" stroke-width="0.1" style="">$275,000</text>
<text x="475.20" y="170.50" font-size="9.60" textLength="39.23" lengthAdjust="spacingAndGlyphs" fill="#858892" stroke="#858892" stroke-width="0.1" style="">$278,636</text>
<text x="398.80" y="201.90" font-size="7.00" textLength="45.05" lengthAdjust="spacingAndGlyphs" fill="#4a5063" stroke="#4a5063" stroke-width="0.22" style="">CASH ON CASH</text>
<text x="448.90" y="201.90" font-size="7.00" textLength="12.86" lengthAdjust="spacingAndGlyphs" fill="#4a5063" stroke="#4a5063" stroke-width="0.22" style="">Trad.</text>
<text x="465.60" y="201.90" font-size="7.00" textLength="17.09" lengthAdjust="spacingAndGlyphs" fill="#2fc18f" stroke="#2fc18f" stroke-width="0.22" style="">3.83%</text>
<text x="487.80" y="201.90" font-size="7.00" textLength="18.20" lengthAdjust="spacingAndGlyphs" fill="#4a5063" stroke="#4a5063" stroke-width="0.22" style="">Airbnb</text>
<text x="509.60" y="201.90" font-size="7.00" textLength="17.19" lengthAdjust="spacingAndGlyphs" fill="#2fc18f" stroke="#2fc18f" stroke-width="0.22" style="">6.58%</text>
<text x="566.80" y="109.00" font-size="10.40" textLength="71.09" lengthAdjust="spacingAndGlyphs" fill="#449ad9" stroke="#449ad9" stroke-width="0.22" style="">5842 Mcnair Rd</text>
<text x="572.50" y="123.60" font-size="10.40" textLength="59.43" lengthAdjust="spacingAndGlyphs" fill="#449ad9" stroke="#449ad9" stroke-width="0.22" style="">Charlotte, NC</text>
<text x="556.50" y="152.10" font-size="6.10" textLength="27.85" lengthAdjust="spacingAndGlyphs" fill="#4a5063" stroke="#4a5063" stroke-width="0.08" style="font-weight:bold;">LIST PRICE</text>
<text x="609.80" y="152.10" font-size="6.10" textLength="48.86" lengthAdjust="spacingAndGlyphs" fill="#4a5063" stroke="#4a5063" stroke-width="0.08" style="font-weight:bold;">ESTIMATED VALUE</text>
<text x="551.50" y="170.50" font-size="9.60" textLength="38.12" lengthAdjust="spacingAndGlyphs" fill="#858892" stroke="#858892" stroke-width="0.1" style="">$399,000</text>
<text x="627.40" y="170.50" font-size="9.60" textLength="13.49" lengthAdjust="spacingAndGlyphs" fill="#858892" stroke="#858892" stroke-width="0.1" style="">N/A</text>
<text x="538.60" y="201.90" font-size="7.00" textLength="45.05" lengthAdjust="spacingAndGlyphs" fill="#4a5063" stroke="#4a5063" stroke-width="0.22" style="">CASH ON CASH</text>
<text x="588.70" y="201.90" font-size="7.00" textLength="12.86" lengthAdjust="spacingAndGlyphs" fill="#4a5063" stroke="#4a5063" stroke-width="0.22" style="">Trad.</text>
<text x="605.40" y="201.90" font-size="7.00" textLength="17.09" lengthAdjust="spacingAndGlyphs" fill="#2fc18f" stroke="#2fc18f" stroke-width="0.22" style="">3.95%</text>
<text x="627.60" y="201.90" font-size="7.00" textLength="18.20" lengthAdjust="spacingAndGlyphs" fill="#4a5063" stroke="#4a5063" stroke-width="0.22" style="">Airbnb</text>
<text x="649.40" y="201.90" font-size="7.00" textLength="17.19" lengthAdjust="spacingAndGlyphs" fill="#2fc18f" stroke="#2fc18f" stroke-width="0.22" style="">5.99%</text>
<text x="275.85" y="291.80" font-size="10.40" textLength="94.87" lengthAdjust="spacingAndGlyphs" fill="#449ad9" stroke="#449ad9" stroke-width="0.22" style="">6519 Montezuma T...</text>
<text x="292.90" y="306.40" font-size="10.40" textLength="59.43" lengthAdjust="spacingAndGlyphs" fill="#449ad9" stroke="#449ad9" stroke-width="0.22" style="">Charlotte, NC</text>
<text x="276.90" y="334.90" font-size="6.10" textLength="27.85" lengthAdjust="spacingAndGlyphs" fill="#4a5063" stroke="#4a5063" stroke-width="0.08" style="font-weight:bold;">LIST PRICE</text>
<text x="330.20" y="334.90" font-size="6.10" textLength="48.86" lengthAdjust="spacingAndGlyphs" fill="#4a5063" stroke="#4a5063" stroke-width="0.08" style="font-weight:bold;">ESTIMATED VALUE</text>
<text x="271.90" y="353.30" font-size="9.60" textLength="38.12" lengthAdjust="spacingAndGlyphs" fill="#858892" stroke="#858892" stroke-width="0.1" style="">$285,000</text>
<text x="335.40" y="353.30" font-size="9.60" textLength="38.26" lengthAdjust="spacingAndGlyphs" fill="#858892" stroke="#858892" stroke-width="0.1" style="">$292,244</text>
<text x="259.00" y="384.70" font-size="7.00" textLength="45.05" lengthAdjust="spacingAndGlyphs" fill="#4a5063" stroke="#4a5063" stroke-width="0.22" style="">CASH ON CASH</text>
<text x="309.10" y="384.70" font-size="7.00" textLength="12.86" lengthAdjust="spacingAndGlyphs" fill="#4a5063" stroke="#4a5063" stroke-width="0.22" style="">Trad.</text>
<text x="325.80" y="384.70" font-size="7.00" textLength="17.09" lengthAdjust="spacingAndGlyphs" fill="#2fc18f" stroke="#2fc18f" stroke-width="0.22" style="">3.87%</text>
<text x="348.00" y="384.70" font-size="7.00" textLength="18.20" lengthAdjust="spacingAndGlyphs" fill="#4a5063" stroke="#4a5063" stroke-width="0.22" style="">Airbnb</text>
<text x="369.80" y="384.70" font-size="7.00" textLength="17.19" lengthAdjust="spacingAndGlyphs" fill="#2fc18f" stroke="#2fc18f" stroke-width="0.22" style="">4.59%</text>
<text x="290.95" y="270.20" font-size="7.90" textLength="64.38" lengthAdjust="spacingAndGlyphs" fill="#50535b" stroke="#50535b" stroke-width="0.22" style="">6519 Montezuma Trl</text>
<text x="430.65" y="291.80" font-size="10.40" textLength="64.30" lengthAdjust="spacingAndGlyphs" fill="#449ad9" stroke="#449ad9" stroke-width="0.22" style="">7812 Portia Pl</text>
<text x="432.70" y="306.40" font-size="10.40" textLength="59.43" lengthAdjust="spacingAndGlyphs" fill="#449ad9" stroke="#449ad9" stroke-width="0.22" style="">Charlotte, NC</text>
<text x="416.70" y="334.90" font-size="6.10" textLength="27.85" lengthAdjust="spacingAndGlyphs" fill="#4a5063" stroke="#4a5063" stroke-width="0.08" style="font-weight:bold;">LIST PRICE</text>
<text x="470.00" y="334.90" font-size="6.10" textLength="48.86" lengthAdjust="spacingAndGlyphs" fill="#4a5063" stroke="#4a5063" stroke-width="0.08" style="font-weight:bold;">ESTIMATED VALUE</text>
<text x="411.70" y="353.30" font-size="9.60" textLength="38.12" lengthAdjust="spacingAndGlyphs" fill="#858892" stroke="#858892" stroke-width="0.1" style="">$295,000</text>
<text x="475.20" y="353.30" font-size="9.60" textLength="39.23" lengthAdjust="spacingAndGlyphs" fill="#858892" stroke="#858892" stroke-width="0.1" style="">$322,099</text>
<text x="398.80" y="384.70" font-size="7.00" textLength="45.05" lengthAdjust="spacingAndGlyphs" fill="#4a5063" stroke="#4a5063" stroke-width="0.22" style="">CASH ON CASH</text>
<text x="448.90" y="384.70" font-size="7.00" textLength="12.86" lengthAdjust="spacingAndGlyphs" fill="#4a5063" stroke="#4a5063" stroke-width="0.22" style="">Trad.</text>
<text x="465.60" y="384.70" font-size="7.00" textLength="17.09" lengthAdjust="spacingAndGlyphs" fill="#2fc18f" stroke="#2fc18f" stroke-width="0.22" style="">3.81%</text>
<text x="487.80" y="384.70" font-size="7.00" textLength="18.20" lengthAdjust="spacingAndGlyphs" fill="#4a5063" stroke="#4a5063" stroke-width="0.22" style="">Airbnb</text>
<text x="509.60" y="384.70" font-size="7.00" textLength="17.19" lengthAdjust="spacingAndGlyphs" fill="#2fc18f" stroke="#2fc18f" stroke-width="0.22" style="">4.50%</text>
<text x="440.65" y="270.20" font-size="7.90" textLength="43.98" lengthAdjust="spacingAndGlyphs" fill="#50535b" stroke="#50535b" stroke-width="0.22" style="">7812 Portia Pl</text>
<text x="557.25" y="291.80" font-size="10.40" textLength="91.26" lengthAdjust="spacingAndGlyphs" fill="#449ad9" stroke="#449ad9" stroke-width="0.22" style="">7210 Leesburg Ro...</text>
<text x="572.50" y="306.40" font-size="10.40" textLength="59.43" lengthAdjust="spacingAndGlyphs" fill="#449ad9" stroke="#449ad9" stroke-width="0.22" style="">Charlotte, NC</text>
<text x="556.50" y="334.90" font-size="6.10" textLength="27.85" lengthAdjust="spacingAndGlyphs" fill="#4a5063" stroke="#4a5063" stroke-width="0.08" style="font-weight:bold;">LIST PRICE</text>
<text x="609.80" y="334.90" font-size="6.10" textLength="48.86" lengthAdjust="spacingAndGlyphs" fill="#4a5063" stroke="#4a5063" stroke-width="0.08" style="font-weight:bold;">ESTIMATED VALUE</text>
<text x="551.50" y="353.30" font-size="9.60" textLength="38.12" lengthAdjust="spacingAndGlyphs" fill="#858892" stroke="#858892" stroke-width="0.1" style="">$400,000</text>
<text x="615.00" y="353.30" font-size="9.60" textLength="39.23" lengthAdjust="spacingAndGlyphs" fill="#858892" stroke="#858892" stroke-width="0.1" style="">$402,022</text>
<text x="538.60" y="384.70" font-size="7.00" textLength="45.05" lengthAdjust="spacingAndGlyphs" fill="#4a5063" stroke="#4a5063" stroke-width="0.22" style="">CASH ON CASH</text>
<text x="588.70" y="384.70" font-size="7.00" textLength="12.86" lengthAdjust="spacingAndGlyphs" fill="#4a5063" stroke="#4a5063" stroke-width="0.22" style="">Trad.</text>
<text x="605.40" y="384.70" font-size="7.00" textLength="17.09" lengthAdjust="spacingAndGlyphs" fill="#2fc18f" stroke="#2fc18f" stroke-width="0.22" style="">3.29%</text>
<text x="627.60" y="384.70" font-size="7.00" textLength="18.20" lengthAdjust="spacingAndGlyphs" fill="#4a5063" stroke="#4a5063" stroke-width="0.22" style="">Airbnb</text>
<text x="649.40" y="384.70" font-size="7.00" textLength="17.19" lengthAdjust="spacingAndGlyphs" fill="#2fc18f" stroke="#2fc18f" stroke-width="0.22" style="">4.21%</text>
<text x="280.30" y="474.70" font-size="10.40" textLength="85.96" lengthAdjust="spacingAndGlyphs" fill="#449ad9" stroke="#449ad9" stroke-width="0.22" style="">10826 Hunters Tr...</text>
<text x="292.90" y="489.30" font-size="10.40" textLength="59.43" lengthAdjust="spacingAndGlyphs" fill="#449ad9" stroke="#449ad9" stroke-width="0.22" style="">Charlotte, NC</text>
<text x="276.90" y="517.80" font-size="6.10" textLength="27.85" lengthAdjust="spacingAndGlyphs" fill="#4a5063" stroke="#4a5063" stroke-width="0.08" style="font-weight:bold;">LIST PRICE</text>
<text x="330.20" y="517.80" font-size="6.10" textLength="48.86" lengthAdjust="spacingAndGlyphs" fill="#4a5063" stroke="#4a5063" stroke-width="0.08" style="font-weight:bold;">ESTIMATED VALUE</text>
<text x="421.80" y="474.70" font-size="10.40" textLength="81.49" lengthAdjust="spacingAndGlyphs" fill="#449ad9" stroke="#449ad9" stroke-width="0.22" style="">2959 Ross Avenue</text>
<text x="432.70" y="489.30" font-size="10.40" textLength="59.43" lengthAdjust="spacingAndGlyphs" fill="#449ad9" stroke="#449ad9" stroke-width="0.22" style="">Charlotte, NC</text>
<text x="416.70" y="517.80" font-size="6.10" textLength="27.85" lengthAdjust="spacingAndGlyphs" fill="#4a5063" stroke="#4a5063" stroke-width="0.08" style="font-weight:bold;">LIST PRICE</text>
<text x="470.00" y="517.80" font-size="6.10" textLength="48.86" lengthAdjust="spacingAndGlyphs" fill="#4a5063" stroke="#4a5063" stroke-width="0.08" style="font-weight:bold;">ESTIMATED VALUE</text>
<text x="558.50" y="474.70" font-size="10.40" textLength="88.76" lengthAdjust="spacingAndGlyphs" fill="#449ad9" stroke="#449ad9" stroke-width="0.22" style="">1301 Rollingwood...</text>
<text x="572.50" y="489.30" font-size="10.40" textLength="59.43" lengthAdjust="spacingAndGlyphs" fill="#449ad9" stroke="#449ad9" stroke-width="0.22" style="">Charlotte, NC</text>
<text x="556.50" y="517.80" font-size="6.10" textLength="27.85" lengthAdjust="spacingAndGlyphs" fill="#4a5063" stroke="#4a5063" stroke-width="0.08" style="font-weight:bold;">LIST PRICE</text>
<text x="609.80" y="517.80" font-size="6.10" textLength="48.86" lengthAdjust="spacingAndGlyphs" fill="#4a5063" stroke="#4a5063" stroke-width="0.08" style="font-weight:bold;">ESTIMATED VALUE</text>
<text x="570.25" y="453.10" font-size="7.90" textLength="64.87" lengthAdjust="spacingAndGlyphs" fill="#50535b" stroke="#50535b" stroke-width="0.22" style="">1301 Rollingwood Dr</text>
</svg>
</body></html>
